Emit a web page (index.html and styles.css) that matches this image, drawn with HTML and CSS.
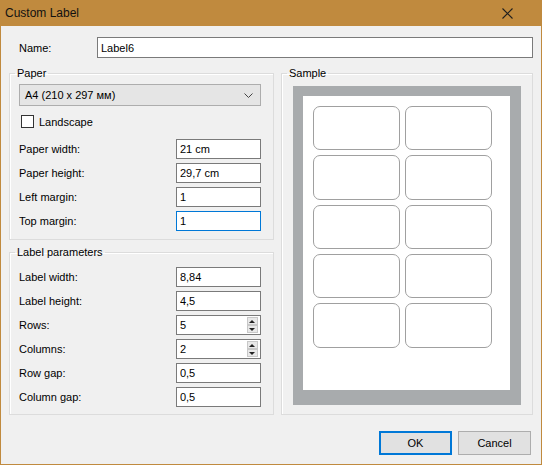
FILE: index.html
```html
<!DOCTYPE html>
<html lang="en">
<head>
  <meta charset="UTF-8" />
  <title>Custom Label</title>
  <link rel="stylesheet" href="styles.css">
</head>
<body>
  <div class="window">
    <div class="titlebar">
      <span class="title">Custom Label</span>
      <svg class="close" width="11" height="11" viewBox="0 0 11 11">
        <path d="M0.5 0.5 L10.5 10.5 M10.5 0.5 L0.5 10.5" stroke="#1e1e1e" stroke-width="1.1" fill="none"/>
      </svg>
    </div>

    <div class="content">
      <div class="name-row">
        <span class="name-label">Name:</span>
        <input class="text name-input" type="text" value="Label6">
      </div>

      <div class="columns">
        <div class="left">
          <fieldset class="group paper">
            <legend>Paper</legend>
            <div class="combo">
              <span>A4 (210 x 297 мм)</span>
              <svg width="9" height="5" viewBox="0 0 9 5">
                <path d="M0.5 0.5 L4.5 4.5 L8.5 0.5" stroke="#444" stroke-width="1" fill="none"/>
              </svg>
            </div>
            <div class="check">
              <span class="box"></span>
              <span>Landscape</span>
            </div>
            <div class="fields">
              <div class="field"><span>Paper width:</span><input class="text" type="text" value="21 cm"></div>
              <div class="field"><span>Paper height:</span><input class="text" type="text" value="29,7 cm"></div>
              <div class="field"><span>Left margin:</span><input class="text" type="text" value="1"></div>
              <div class="field"><span>Top margin:</span><input class="text focused" type="text" value="1"></div>
            </div>
          </fieldset>

          <fieldset class="group params">
            <legend>Label parameters</legend>
            <div class="fields">
              <div class="field"><span>Label width:</span><input class="text" type="text" value="8,84"></div>
              <div class="field"><span>Label height:</span><input class="text" type="text" value="4,5"></div>
              <div class="field">
                <span>Rows:</span>
                <div class="spin">
                  <span class="spin-value">5</span>
                  <span class="spin-buttons"><span class="up"></span><span class="down"></span></span>
                </div>
              </div>
              <div class="field">
                <span>Columns:</span>
                <div class="spin">
                  <span class="spin-value">2</span>
                  <span class="spin-buttons"><span class="up"></span><span class="down"></span></span>
                </div>
              </div>
              <div class="field"><span>Row gap:</span><input class="text" type="text" value="0,5"></div>
              <div class="field"><span>Column gap:</span><input class="text" type="text" value="0,5"></div>
            </div>
          </fieldset>
        </div>

        <fieldset class="group sample">
          <legend>Sample</legend>
          <div class="sheet">
            <div class="page">
              <div class="label"></div><div class="label"></div>
              <div class="label"></div><div class="label"></div>
              <div class="label"></div><div class="label"></div>
              <div class="label"></div><div class="label"></div>
              <div class="label"></div><div class="label"></div>
            </div>
          </div>
        </fieldset>
      </div>

      <div class="buttons">
        <button class="btn default">OK</button>
        <button class="btn">Cancel</button>
      </div>
    </div>
  </div>
</body>
</html>
```

FILE: styles.css
```css
body {
  margin: 0;
  font-family: "Liberation Sans", Arial, sans-serif;
  font-size: 11px;
  color: #000;
}

.window {
  width: 542px;
  height: 465px;
  box-sizing: border-box;
  border: 1px solid #c08a3e;
  border-top: 0;
  background: #f0f0f0;
  display: flex;
  flex-direction: column;
}

.titlebar {
  height: 26px;
  margin: 0 -1px;
  padding-left: 5px;
  background: #c08a3e;
  display: flex;
  align-items: center;
  justify-content: space-between;
}
.title {
  font-size: 12px;
  color: #111;
}
.close {
  margin-right: 29px;
}

.content {
  flex: 1;
  padding: 11px 8px 0 8px;
  display: flex;
  flex-direction: column;
}

.name-row {
  display: flex;
  align-items: center;
  padding-left: 10px;
  height: 21px;
}
.name-label {
  width: 78px;
}
.text {
  box-sizing: border-box;
  width: 85px;
  height: 20px;
  margin: 0;
  padding: 0 3px;
  border: 1px solid #7a7a7a;
  background: #fff;
  font: inherit;
  color: #000;
  outline: none;
}
.name-input {
  flex: 1;
  height: 21px;
}
.text.focused {
  border-color: #0078d7;
}

.columns {
  margin-top: 8px;
  display: flex;
  gap: 7px;
}
.left {
  width: 266px;
  display: flex;
  flex-direction: column;
  gap: 5px;
}

.group {
  margin: 0;
  min-width: 0;
  box-sizing: border-box;
  border: 1px solid #dcdcdc;
  box-shadow: inset 1px 1px 0 #fff;
}
.group legend {
  padding: 0 2px;
  line-height: 14px;
  margin-left: -4px;
}
.paper {
  padding: 4px 12px 8px 9px;
}
.params {
  padding: 8px 12px 7px 9px;
}
.sample {
  width: 253px;
  padding: 6px 12px 9px 11px;
}
.sample legend {
  margin-left: -6px;
}

.combo {
  box-sizing: border-box;
  height: 22px;
  border: 1px solid #adadad;
  background: #e5e5e5;
  padding: 0 7px 0 5px;
  display: flex;
  align-items: center;
  justify-content: space-between;
}

.check {
  margin: 9px 0 0 2px;
  height: 13px;
  display: flex;
  align-items: center;
  gap: 5px;
}
.box {
  box-sizing: border-box;
  width: 13px;
  height: 13px;
  border: 1px solid #333;
  background: #fff;
}

.fields {
  display: flex;
  flex-direction: column;
  gap: 4px;
}
.paper .fields {
  margin-top: 11px;
}
.field {
  height: 20px;
  display: flex;
  align-items: center;
  justify-content: space-between;
}

.spin {
  box-sizing: border-box;
  width: 85px;
  height: 20px;
  border: 1px solid #7a7a7a;
  background: #fff;
  display: flex;
  align-items: center;
  justify-content: space-between;
  padding: 0 2px 0 3px;
}
.spin-buttons {
  width: 11px;
  height: 16px;
  display: flex;
  flex-direction: column;
  gap: 0;
}
.spin-buttons span {
  flex: 1;
  box-sizing: border-box;
  border: 1px solid #c8c8c8;
  background: #e8e8e8;
  display: flex;
  align-items: center;
  justify-content: center;
}
.spin-buttons span::after {
  content: "";
  border-left: 3px solid transparent;
  border-right: 3px solid transparent;
}
.spin-buttons .up::after {
  border-bottom: 3px solid #222;
}
.spin-buttons .down::after {
  border-top: 3px solid #222;
}

.sheet {
  box-sizing: border-box;
  width: 228px;
  height: 319px;
  padding: 10px 0 0 10px;
  background: #a8abad;
}
.page {
  box-sizing: border-box;
  width: 207px;
  height: 294px;
  padding: 10px 0 0 10px;
  background: #fff;
  display: grid;
  grid-template-columns: 87px 87px;
  grid-auto-rows: 44.4px;
  column-gap: 5px;
  row-gap: 4.9px;
  align-content: start;
}
.label {
  border: 1px solid #a0a0a0;
  border-radius: 7px;
  background: #fff;
}

.buttons {
  margin-top: 16px;
  padding-right: 2px;
  display: flex;
  justify-content: flex-end;
  gap: 6px;
}
.btn {
  box-sizing: border-box;
  width: 73px;
  height: 24px;
  margin: 0;
  border: 1px solid #adadad;
  background: #e1e1e1;
  font: inherit;
  color: #000;
}
.btn.default {
  border: 2px solid #0078d7;
}
```
